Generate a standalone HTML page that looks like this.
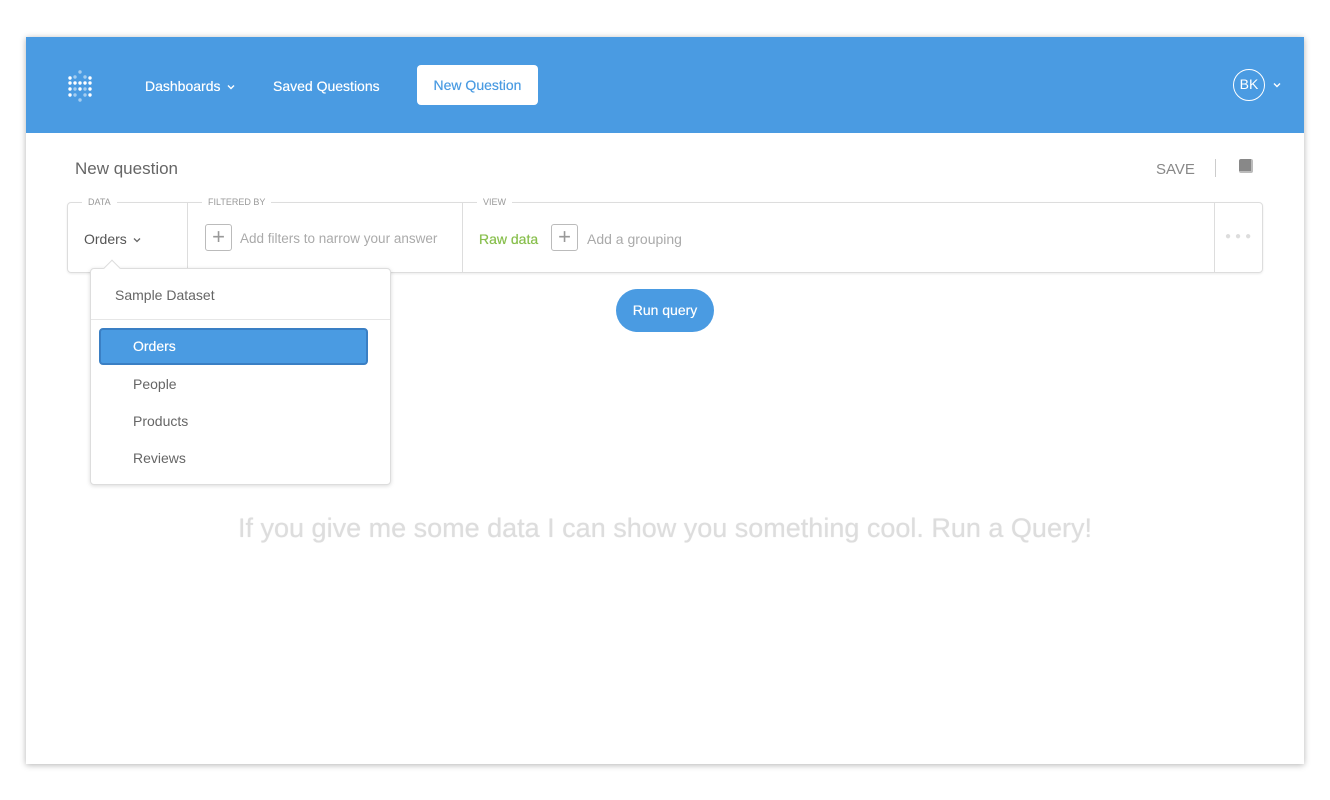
<!DOCTYPE html>
<html><head><style>
*{box-sizing:border-box;margin:0;padding:0}
body{width:1330px;height:800px;background:#fff;font-family:"Liberation Sans",sans-serif;position:relative;overflow:hidden}
.win{position:absolute;left:26px;top:37px;width:1278px;height:727px;background:#fff;box-shadow:0 1px 6px rgba(0,0,0,.3)}
.nav{position:absolute;left:0;top:0;width:1278px;height:96px;background:#4a9be2}
.abs{position:absolute}
.navt{color:#fff;font-size:14px;top:41px;text-shadow:0 0 .4px #fff}
.btn{left:391px;top:28px;width:121px;height:40px;background:#fff;border-radius:4px;color:#4a9be2;font-size:14px;text-align:center;line-height:40px;text-shadow:0 0 .4px #4a9be2}
.box{left:41px;top:165px;width:1196px;height:71px;border:1px solid #ddd;border-radius:4px;box-shadow:0 1px 2px rgba(0,0,0,.08)}
.lbl{font-size:9px;color:#999;background:#fff;padding:0 6px}
.g{color:#aaa;font-size:14px}
.plus{width:27px;height:27px;border:1px solid #bbb;border-radius:3px;color:#999;font-size:22px;text-align:center;line-height:24px}
.chev{display:inline-block;vertical-align:middle}
</style></head><body>
<div class="win">
<div class="nav">
<svg class="abs" style="left:40px;top:32px" width="30" height="34">
<g fill="#fff" opacity=".5"><circle cx="14" cy="3" r="1.7"/><circle cx="14" cy="31" r="1.7"/><circle cx="9" cy="8" r="1.7"/><circle cx="19" cy="8" r="1.7"/><circle cx="9" cy="20" r="1.7"/><circle cx="19" cy="20" r="1.7"/><circle cx="9" cy="26" r="1.7"/><circle cx="19" cy="26" r="1.7"/></g>
<g fill="#fff"><circle cx="4" cy="9" r="1.7"/><circle cx="4" cy="14" r="1.7"/><circle cx="4" cy="20" r="1.7"/><circle cx="4" cy="26" r="1.7"/><circle cx="24" cy="9" r="1.7"/><circle cx="24" cy="14" r="1.7"/><circle cx="24" cy="20" r="1.7"/><circle cx="24" cy="26" r="1.7"/><circle cx="9" cy="14" r="1.7"/><circle cx="14" cy="14" r="1.7"/><circle cx="14" cy="20" r="1.7"/><circle cx="19" cy="14" r="1.7"/></g></svg>
<div class="abs navt" style="left:119px">Dashboards <svg class="chev" style="margin-left:3px" width="8" height="6"><path d="M1 1.5L4 4.5 7 1.5" stroke="#fff" stroke-width="1.4" fill="none"/></svg></div>
<div class="abs navt" style="left:247px">Saved Questions</div>
<div class="abs btn">New Question</div>
<div class="abs" style="left:1207px;top:32px;width:32px;height:32px;border:1.5px solid #fff;border-radius:50%;color:#fff;font-size:14px;text-align:center;line-height:29px">BK</div>
<svg class="abs" style="left:1247px;top:45px" width="8" height="6"><path d="M1 1.5L4 4.5 7 1.5" stroke="#fff" stroke-width="1.4" fill="none"/></svg>
</div>
<div class="abs" style="left:49px;top:122px;font-size:17px;color:#666">New question</div>
<div class="abs" style="left:1130px;top:124px;font-size:15px;color:#888">SAVE</div>
<div class="abs" style="left:1189px;top:122px;width:1px;height:18px;background:#ccc"></div>
<div class="abs" style="left:1213px;top:122px;width:14px;height:14px;background:#888;border-radius:2px;border-bottom:2px solid #bbb;border-right:2px solid #bbb"></div>
<div class="abs box">
 <div class="abs lbl" style="left:14px;top:-6px">DATA</div>
 <div class="abs lbl" style="left:134px;top:-6px">FILTERED BY</div>
 <div class="abs lbl" style="left:409px;top:-6px">VIEW</div>
 <div class="abs" style="left:119px;top:0;width:1px;height:69px;background:#ddd"></div>
 <div class="abs" style="left:394px;top:0;width:1px;height:69px;background:#ddd"></div>
 <div class="abs" style="left:1146px;top:0;width:1px;height:69px;background:#ddd"></div>
 <div class="abs" style="left:16px;top:28px;font-size:14px;color:#555">Orders <svg class="chev" style="margin-left:2px" width="8" height="6"><path d="M1 1.5L4 4.5 7 1.5" stroke="#666" stroke-width="1.3" fill="none"/></svg></div>
 <div class="abs plus" style="left:137px;top:21px">+</div>
 <div class="abs g" style="left:172px;top:28px;font-size:13.5px">Add filters to narrow your answer</div>
 <div class="abs" style="left:411px;top:28px;font-size:14px;color:#88bf4d;text-shadow:0 0 .5px #88bf4d">Raw data</div>
 <div class="abs plus" style="left:483px;top:21px">+</div>
 <div class="abs g" style="left:519px;top:28px">Add a grouping</div>
 <div class="abs" style="left:1157px;top:28px;color:#ddd;font-size:10px;letter-spacing:4px">&#9679;&#9679;&#9679;</div>
</div>
<div class="abs" style="left:590px;top:252px;width:98px;height:43px;border-radius:22px;background:#4a9be2;color:#fff;font-size:14px;text-shadow:0 0 .4px #fff;text-align:center;line-height:43px">Run query</div>
<div class="abs" style="left:64px;top:231px;width:301px;height:217px;background:#fff;border:1px solid #ddd;border-radius:4px;box-shadow:0 1px 4px rgba(0,0,0,.15)">
 <div class="abs" style="left:15px;top:-7px;width:12px;height:12px;background:#fff;border-left:1px solid #ddd;border-top:1px solid #ddd;transform:rotate(45deg)"></div>
 <div class="abs" style="left:24px;top:18px;font-size:14px;color:#666">Sample Dataset</div>
 <div class="abs" style="left:0;top:50px;width:299px;height:1px;background:#e6e6e6"></div>
 <div class="abs" style="left:8px;top:59px;width:269px;height:37px;background:#4a9be2;border:2px solid #3a7fc4;border-radius:4px;color:#fff;font-size:14px;text-shadow:0 0 .4px #fff;padding-left:32px;line-height:33px">Orders</div>
 <div class="abs" style="left:42px;top:107px;font-size:14px;color:#666">People</div>
 <div class="abs" style="left:42px;top:144px;font-size:14px;color:#666">Products</div>
 <div class="abs" style="left:42px;top:181px;font-size:14px;color:#666">Reviews</div>
</div>
<div class="abs" style="left:0;width:1278px;top:476px;text-align:center;font-size:27px;color:#ddd;text-shadow:0 0 .8px #ddd">If you give me some data I can show you something cool. Run a Query!</div>
</div>
</body></html>
